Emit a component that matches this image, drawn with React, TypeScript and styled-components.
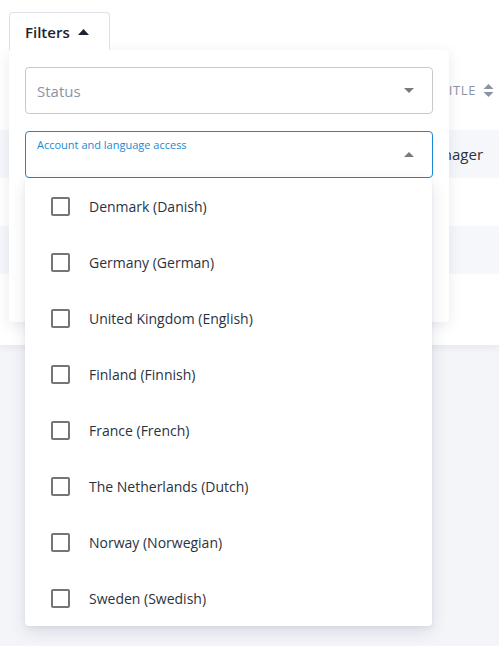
import React from "react";
import styled, { createGlobalStyle } from "styled-components";

const Global = createGlobalStyle`
  html, body { margin: 0; padding: 0; }
  body {
    background: #f4f5f9;
    font-family: "Open Sans", "Noto Sans", sans-serif;
    color: #2b3240;
    width: 499px;
    height: 646px;
    overflow: hidden;
  }
  * { box-sizing: border-box; }
`;

const Page = styled.div`
  position: relative;
  width: 499px;
  height: 646px;
`;

const TableCard = styled.div`
  background: #ffffff;
  height: 345px;
  box-shadow: 0 2px 8px rgba(40, 50, 90, 0.08);
  display: flex;
  flex-direction: column;
`;

const Toolbar = styled.div`
  height: 50px;
  padding: 12px 9px 0;
  display: flex;
  align-items: flex-start;
`;

const FiltersButton = styled.button`
  position: relative;
  z-index: 3;
  height: 38px;
  width: 101px;
  border: 1px solid #dde0e6;
  border-bottom: none;
  border-radius: 4px 4px 0 0;
  background: #fff;
  padding: 0 0 0 15px;
  display: flex;
  align-items: center;
  gap: 8px;
  font-family: inherit;
  font-size: 15px;
  font-weight: 600;
  color: #1d2430;
  cursor: pointer;
`;

const HeaderRow = styled.div`
  height: 80px;
  display: flex;
  align-items: center;
  padding-left: 441px;
  gap: 7px;
  font-size: 13px;
  letter-spacing: 0.6px;
  color: #8a94a6;
`;

const Row = styled.div<{ $shade: boolean }>`
  height: 48px;
  background: ${(p) => (p.$shade ? "#f6f7fb" : "#ffffff")};
  display: flex;
  align-items: center;
  padding-left: 421px;
  font-size: 15px;
  color: #2b3240;
`;

const Panel = styled.div`
  position: absolute;
  z-index: 2;
  left: 9px;
  top: 50px;
  width: 440px;
  height: 272px;
  background: #fff;
  border-radius: 0 4px 4px 4px;
  box-shadow: 0 3px 14px rgba(40, 50, 90, 0.1);
  padding: 17px 16px;
  display: flex;
  flex-direction: column;
  gap: 17px;
`;

const Select = styled.div<{ $focused?: boolean }>`
  position: relative;
  height: 47px;
  border: 1px solid ${(p) => (p.$focused ? "#1b89d3" : "#c7c9cd")};
  border-radius: 4px;
  display: flex;
  align-items: center;
  padding: 0 18px 0 11px;
  background: #fff;
`;

const Placeholder = styled.span`
  flex: 1;
  font-size: 15px;
  color: #8a94a6;
`;

const FloatLabel = styled.span`
  position: absolute;
  left: 11px;
  top: 5px;
  font-size: 11px;
  color: #1b89d3;
`;

const Arrow = styled.span<{ $up?: boolean }>`
  margin-left: auto;
  width: 0;
  height: 0;
  border-left: 5px solid transparent;
  border-right: 5px solid transparent;
  ${(p) =>
    p.$up
      ? "border-bottom: 5px solid #7a7a7a;"
      : "border-top: 5px solid #7a7a7a;"}
`;

const Menu = styled.ul`
  position: absolute;
  z-index: 4;
  left: 25px;
  top: 178px;
  width: 407px;
  margin: 0;
  padding: 0;
  list-style: none;
  background: #fff;
  border-radius: 0 0 4px 4px;
  box-shadow: 0 6px 16px rgba(40, 50, 90, 0.12), 0 2px 4px rgba(40, 50, 90, 0.06);
`;

const Item = styled.li`
  height: 56px;
  display: flex;
  align-items: center;
  padding-left: 26px;
  gap: 19px;
  font-size: 14px;
  color: #2b3240;
`;

const Box = styled.span`
  width: 19px;
  height: 19px;
  border: 2px solid #757575;
  border-radius: 2px;
  flex-shrink: 0;
`;

const languages = [
  "Denmark (Danish)",
  "Germany (German)",
  "United Kingdom (English)",
  "Finland (Finnish)",
  "France (French)",
  "The Netherlands (Dutch)",
  "Norway (Norwegian)",
  "Sweden (Swedish)",
];

const SortIcon = () => (
  <svg width="11" height="13" viewBox="0 0 11 13">
    <path d="M5.5 0 L10.5 5 H0.5 Z" fill="#8a94a6" />
    <path d="M5.5 13 L10.5 8 H0.5 Z" fill="#8a94a6" />
  </svg>
);

const CaretUp = () => (
  <svg width="11" height="6" viewBox="0 0 11 6">
    <path d="M5.5 0 L11 6 H0 Z" fill="#1d2430" />
  </svg>
);

const rows = ["Manager", "", "", ""];

export default function App() {
  return (
    <Page>
      <Global />
      <TableCard>
        <Toolbar>
          <FiltersButton>
            Filters <CaretUp />
          </FiltersButton>
        </Toolbar>
        <HeaderRow>
          TITLE <SortIcon />
        </HeaderRow>
        {rows.map((r, i) => (
          <Row key={i} $shade={i % 2 === 0}>
            {r}
          </Row>
        ))}
      </TableCard>
      <Panel>
        <Select>
          <Placeholder>Status</Placeholder>
          <Arrow />
        </Select>
        <Select $focused>
          <FloatLabel>Account and language access</FloatLabel>
          <Arrow $up />
        </Select>
      </Panel>
      <Menu>
        {languages.map((l) => (
          <Item key={l}>
            <Box />
            {l}
          </Item>
        ))}
      </Menu>
    </Page>
  );
}
